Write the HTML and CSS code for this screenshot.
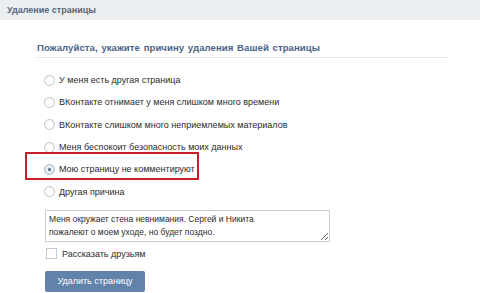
FILE: index.html
```html
<!DOCTYPE html>
<html lang="ru">
<head>
<meta charset="utf-8">
<title>Удаление страницы</title>
<link rel="stylesheet" href="styles.css">
</head>
<body>
<div class="header"><span class="header-title">Удаление страницы</span></div>
<div class="content">
  <h2 class="heading">Пожалуйста, укажите причину удаления Вашей страницы</h2>
  <ul class="reasons">
    <li class="reason"><span class="radio"></span><span class="label">У меня есть другая страница</span></li>
    <li class="reason"><span class="radio"></span><span class="label">ВКонтакте отнимает у меня слишком много времени</span></li>
    <li class="reason"><span class="radio"></span><span class="label">ВКонтакте слишком много неприемлемых материалов</span></li>
    <li class="reason"><span class="radio"></span><span class="label">Меня беспокоит безопасность моих данных</span></li>
    <li class="reason highlight"><span class="radio checked"></span><span class="label">Мою страницу не комментируют</span></li>
    <li class="reason"><span class="radio"></span><span class="label">Другая причина</span></li>
  </ul>
  <textarea class="comment">Меня окружает стена невнимания. Сергей и Никита
пожалеют о моем уходе, но будет поздно.</textarea>
  <div class="tell"><span class="checkbox"></span><span class="label">Рассказать друзьям</span></div>
  <button class="delete-btn">Удалить страницу</button>
</div>
</body>
</html>
```
FILE: styles.css
```css
html, body {
  margin: 0;
  padding: 0;
  background: #ffffff;
  font-family: "Liberation Sans", Arial, sans-serif;
  font-size: 9px;
  color: #000;
  overflow: hidden;
}
.header {
  height: 20px;
  background: #eceff2;
  display: flex;
  align-items: center;
  padding-left: 7px;
}
.header-title {
  font-weight: bold;
  font-size: 9px;
  color: #56657a;
}
.content {
  padding-left: 37px;
  display: flex;
  flex-direction: column;
  align-items: flex-start;
}
.heading {
  margin: 21px 0 0 0;
  width: 410px;
  font-size: 9.6px;
  letter-spacing: 0.05px;
  word-spacing: 1px;
  line-height: 14px;
  font-weight: bold;
  color: #4a6387;
  padding-bottom: 2px;
  border-bottom: 1px solid #e1e6eb;
}
.reasons {
  list-style: none;
  margin: 11px 0 0 7px;
  padding: 0;
}
.reason {
  height: 22.3px;
  display: flex;
  align-items: center;
  gap: 4px;
  position: relative;
}
.radio {
  width: 11px;
  height: 11px;
  box-sizing: border-box;
  border-radius: 50%;
  border: 1px solid #bcc4cc;
  background: radial-gradient(circle at 50% 60%, #ffffff 40%, #eef1f4 100%);
  display: flex;
  align-items: center;
  justify-content: center;
  flex: none;
}
.radio.checked {
  background: #e4edf6;
  border-color: #a9b8c8;
}
.radio.checked::before {
  content: "";
  width: 3px;
  height: 3px;
  border-radius: 50%;
  background: #4e6580;
}
.label {
  color: #2b2b2b;
  white-space: nowrap;
}
.highlight::after {
  content: "";
  position: absolute;
  left: -19px;
  top: -6px;
  width: 174px;
  height: 28px;
  box-sizing: border-box;
  border: 2px solid #c8202b;
}
.comment {
  margin: 7px 0 0 8px;
  width: 285px;
  height: 32px;
  box-sizing: border-box;
  border: 1px solid #c6cfd8;
  padding: 2px 3px;
  font-family: "Liberation Sans", Arial, sans-serif;
  font-size: 8.5px;
  line-height: 13px;
  color: #2b2b2b;
  overflow: hidden;
}
.tell {
  margin: 5px 0 0 9px;
  height: 14px;
  display: flex;
  align-items: center;
  gap: 5px;
}
.checkbox {
  width: 11px;
  height: 11px;
  box-sizing: border-box;
  border: 1px solid #c2cad3;
  background: #fff;
}
.delete-btn {
  margin: 10px 0 0 8px;
  width: 100px;
  height: 21px;
  border: none;
  border-radius: 2px;
  background: #6283a9;
  color: #ffffff;
  font-family: "Liberation Sans", Arial, sans-serif;
  font-size: 9px;
  padding: 0;
}
```
